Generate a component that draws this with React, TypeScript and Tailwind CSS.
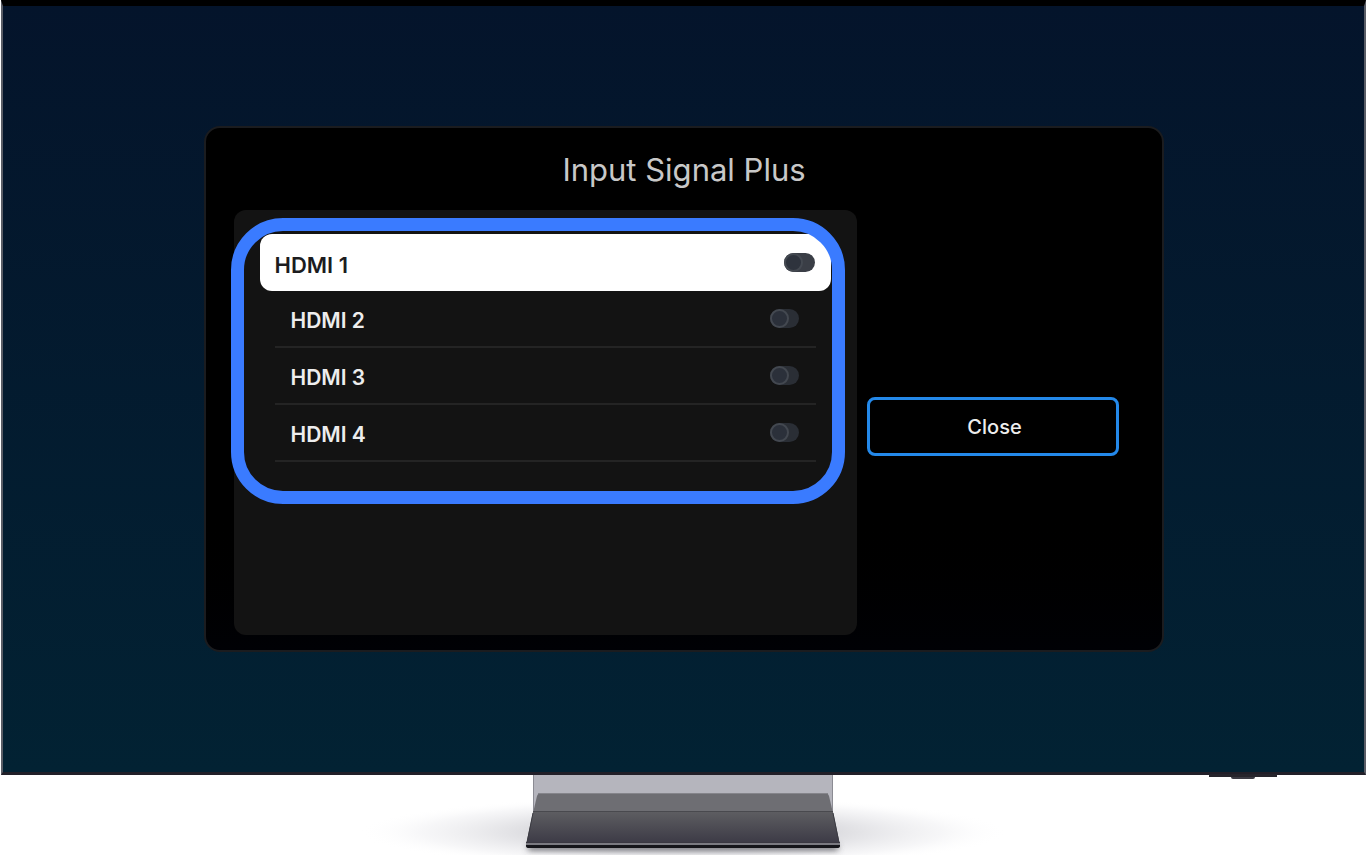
import { useState } from 'react';
import clsx from 'clsx';

const ports = ['HDMI 1', 'HDMI 2', 'HDMI 3', 'HDMI 4'];

interface PortRowProps {
  name: string;
  focused: boolean;
  checked: boolean;
  onToggle: () => void;
}

const PortRow = ({ name, focused, checked, onToggle }: PortRowProps) => (
  <li
    className={clsx(
      focused
        ? 'mx-[26px] rounded-xl bg-white px-[15px] text-[22px] text-[#1c1c1e]'
        : 'mx-[41px] border-b-2 border-[#242424] px-4 text-[21px] text-[#ededed]'
    )}
  >
    <label
      className={clsx(
        'flex items-center justify-between leading-7 font-semibold',
        focused ? 'h-[57px]' : 'h-[55px]'
      )}
    >
      <span className="pt-1">{name}</span>
      <input
        type="checkbox"
        checked={checked}
        onChange={onToggle}
        className={clsx(
          'mr-px flex h-[19px] appearance-none items-center rounded-full before:size-[19px] before:rounded-full before:border-2 checked:justify-end',
          focused
            ? 'w-[31px] bg-[#3a3e46] before:border-[#444951] before:bg-[#2e333d]'
            : 'w-[29px] bg-[#2a2e35] before:border-[#434850] before:bg-[#2b303a]'
        )}
      />
    </label>
  </li>
);

const Stand = () => (
  <div className="flex h-20 justify-center overflow-hidden">
    <svg width="680" height="80" viewBox="-20 0 680 80" aria-hidden="true">
      <defs>
        <radialGradient id="floor">
          <stop offset="0.4" stopColor="#d6d6da" />
          <stop offset="0.6" stopColor="#e6e6e9" stopOpacity="0.9" />
          <stop offset="0.8" stopColor="#f3f3f5" stopOpacity="0.7" />
          <stop offset="1" stopColor="#ffffff" stopOpacity="0" />
        </radialGradient>
        <linearGradient id="base" x1="0" y1="0" x2="0" y2="1">
          <stop offset="0" stopColor="#5d5d61" />
          <stop offset="1" stopColor="#3a3844" />
        </linearGradient>
        <filter id="soft" x="-10%" y="-200%" width="120%" height="500%">
          <feGaussianBlur stdDeviation="3" />
        </filter>
      </defs>
      <ellipse cx="319" cy="57" rx="325" ry="36" fill="url(#floor)" />
      <rect x="164" y="70" width="310" height="5" fill="#55555c" filter="url(#soft)" />
      <rect x="169" y="0" width="300" height="38" fill="#b5b5bd" />
      <path d="M169.500 0V38M468.500 0V38" stroke="#8b8b93" />
      <path d="M173 21Q174 18 177 18H461Q464 18 465 21L469 38H169Z" fill="#6e6e73" />
      <path d="M174 18.500H464" stroke="#85858b" />
      <path d="M169 37H469L476 70H162Z" fill="url(#base)" />
      <path d="M169 36.500H469" stroke="#49494e" />
      <path d="M169 38L162.500 70M469 38L475.500 70" stroke="#3b3b42" />
      <path d="M162 67.500H476" stroke="#3a3842" />
      <path d="M162 69H476" stroke="#909096" strokeWidth="1.500" />
      <path d="M162 70H476V71Q476 73 473 73H165Q162 73 162 71Z" fill="#15151a" />
    </svg>
  </div>
);

const App = () => {
  const [enabled, setEnabled] = useState<string[]>([]);

  const toggle = (name: string) =>
    setEnabled((current) =>
      current.includes(name)
        ? current.filter((item) => item !== name)
        : [...current, name]
    );

  return (
    <div className="overflow-hidden bg-white font-['Inter','Liberation_Sans',sans-serif]">
      <div className="relative mr-0.5 ml-px border-x-2 border-t-[6px] border-b-[3px] border-x-[#5a5d66] border-t-black border-b-[#211f28] bg-linear-to-b from-[#04142b] to-[#022233] px-4 pt-30 pb-30">
        <main className="mx-auto w-full max-w-[960px] rounded-2xl border-2 border-[#1b1c1f] bg-linear-to-b from-black from-70% to-[#000105] pt-[22px] pr-[43px] pb-[15px] pl-7">
          <h1 className="pl-4 text-center text-[31px] leading-10 text-[#c8c8c8]">
            Input Signal Plus
          </h1>

          <div className="mt-5 flex items-center gap-[10px]">
            <section className="h-[425px] grow rounded-xl bg-[#131313] pt-2">
              <div className="relative pt-4 pb-[42px]">
                <ul>
                  {ports.map((name, index) => (
                    <PortRow
                      key={name}
                      name={name}
                      focused={index === 0}
                      checked={enabled.includes(name)}
                      onToggle={() => toggle(name)}
                    />
                  ))}
                </ul>
                {/* Callout ring around the port list */}
                <div className="pointer-events-none absolute inset-y-0 right-3 -left-[3px] rounded-[52px] border-[13px] border-[#3a7bff]" />
              </div>
            </section>

            <button
              type="button"
              className="mt-2 h-[59px] w-[252px] shrink-0 rounded-lg border-3 border-[#2489ea] pl-1 text-[20px] leading-7 font-medium text-[#ededed]"
            >
              Close
            </button>
          </div>
        </main>

        {/* Sensor under the bezel */}
        <div className="absolute right-[87px] -bottom-[7px] flex h-[5px] w-[68px] justify-center border-t-3 border-[#26252c]">
          <div className="h-[2px] w-6 shrink-0 rounded-b-sm bg-[#3c3b43]" />
        </div>
      </div>

      <Stand />
    </div>
  );
};

export default App;
